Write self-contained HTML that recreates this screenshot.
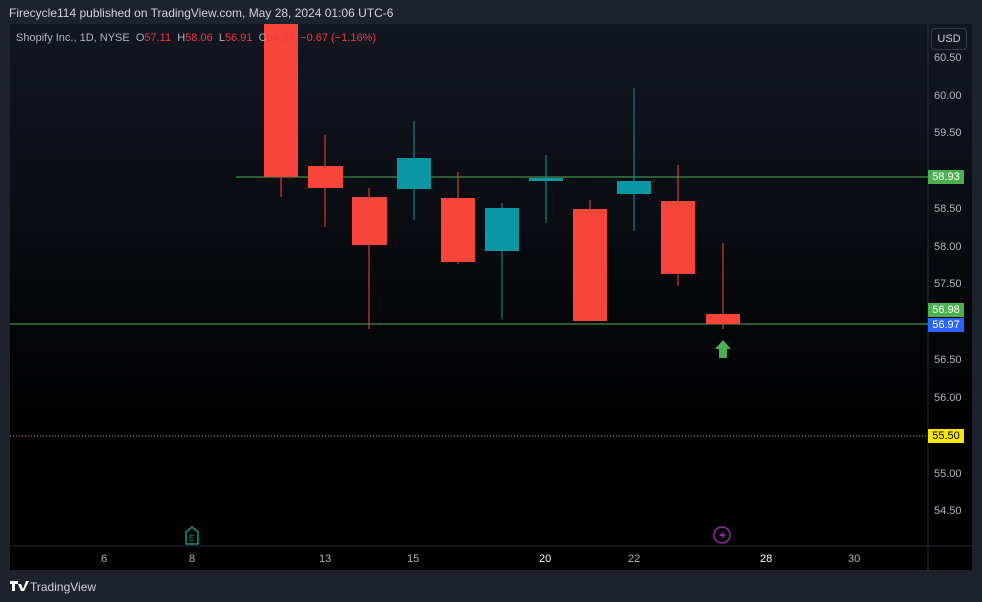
<!DOCTYPE html><html><head><style>
body{margin:0;width:982px;height:602px;background:#1e222d;font-family:"Liberation Sans",sans-serif;overflow:hidden;position:relative}
.t{position:absolute;color:#d1d4dc;font-size:12px}
#chart{position:absolute;left:10px;top:24px;width:962px;height:546px;background:linear-gradient(#131722,#000 75%);border:0}
.ax{position:absolute;color:#b2b5be;font-size:11px}
.lbl{position:absolute;left:928px;width:36px;height:14px;font-size:11px;line-height:14px;text-align:center;color:#000}
</style></head><body>
<div class="t" style="left:9px;top:6px">Firecycle114 published on TradingView.com, May 28, 2024 01:06 UTC-6</div>
<div id="chart"></div>
<svg style="position:absolute;left:0;top:0" width="982" height="602">
<line x1="928" y1="24" x2="928" y2="570" stroke="#2a2e39"/>
<line x1="10" y1="546" x2="972" y2="546" stroke="#2a2e39"/>
<line x1="236" y1="177" x2="928" y2="177" stroke="#4caf50"/>
<line x1="10" y1="324" x2="928" y2="324" stroke="#4caf50"/>
<line x1="10" y1="436" x2="928" y2="436" stroke="#c8b400" stroke-dasharray="1 2"/>
<g stroke-width="1">
<line x1="281" y1="24" x2="281" y2="197" stroke="#f7453a"/><rect x="264" y="24" width="34" height="153" fill="#f7453a"/>
<line x1="325" y1="135" x2="325" y2="227" stroke="#f7453a"/><rect x="308" y="166" width="35" height="22" fill="#f7453a"/>
<line x1="369" y1="188" x2="369" y2="329" stroke="#f7453a"/><rect x="352" y="197" width="35" height="48" fill="#f7453a"/>
<line x1="414" y1="121" x2="414" y2="220" stroke="#0b97a4"/><rect x="397" y="158" width="34" height="31" fill="#0b97a4"/>
<line x1="458" y1="172" x2="458" y2="264" stroke="#f7453a"/><rect x="441" y="198" width="34" height="64" fill="#f7453a"/>
<line x1="502" y1="203" x2="502" y2="319" stroke="#0b97a4"/><rect x="485" y="208" width="34" height="43" fill="#0b97a4"/>
<line x1="546" y1="155" x2="546" y2="223" stroke="#0b97a4"/><rect x="529" y="178" width="34" height="3" fill="#0b97a4"/>
<line x1="590" y1="200" x2="590" y2="321" stroke="#f7453a"/><rect x="573" y="209" width="34" height="112" fill="#f7453a"/>
<line x1="634" y1="88" x2="634" y2="231" stroke="#0b97a4"/><rect x="617" y="181" width="34" height="13" fill="#0b97a4"/>
<line x1="678" y1="165" x2="678" y2="286" stroke="#f7453a"/><rect x="661" y="201" width="34" height="73" fill="#f7453a"/>
<line x1="723" y1="243" x2="723" y2="329" stroke="#f7453a"/><rect x="706" y="314" width="34" height="10" fill="#f7453a"/>
</g>
<path d="M723 340 L731 349 L727 349 L727 358 L719 358 L719 349 L715 349 Z" fill="#4caf50"/>
<path d="M186 532 L192 527 L198 532 L198 544 L186 544 Z" fill="none" stroke="#089981" stroke-width="1.5"/>
<text x="189" y="541" fill="#089981" font-size="8" font-family="Liberation Sans">E</text>
<circle cx="722" cy="535" r="8" fill="none" stroke="#9c27b0" stroke-width="1.5"/>
<path d="M724 530 L719 536 L723 536 L721 541 L726 534 L722 534 Z" fill="#9c27b0"/>
<path d="M10 581 h8 v3 h-3 v7 h-3 v-7 h-2z M18 584 h3 l2 5 l3 -8 h3 l-5 10 h-3z" fill="#fff"/>
</svg>
<div class="t" style="left:30px;top:580px;font-size:12px">TradingView</div>
<div class="t" style="left:16px;top:32px;font-size:11px;color:#b2b5be">Shopify Inc., 1D, NYSE&nbsp; O<span style="color:#f23645">57.11</span>&nbsp; H<span style="color:#f23645">58.06</span>&nbsp; L<span style="color:#f23645">56.91</span>&nbsp; C<span style="color:#f23645">56.97&nbsp; −0.67 (−1.16%)</span></div>
<div style="position:absolute;left:931px;top:28px;width:34px;height:20px;border:1px solid #363a45;border-radius:4px;color:#d1d4dc;font-size:11px;line-height:20px;text-align:center">USD</div>
<div class="ax" style="left:934px;top:52px">60.50</div>
<div class="ax" style="left:934px;top:90px">60.00</div>
<div class="ax" style="left:934px;top:127px">59.50</div>
<div class="ax" style="left:934px;top:203px">58.50</div>
<div class="ax" style="left:934px;top:241px">58.00</div>
<div class="ax" style="left:934px;top:278px">57.50</div>
<div class="ax" style="left:934px;top:354px">56.50</div>
<div class="ax" style="left:934px;top:392px">56.00</div>
<div class="ax" style="left:934px;top:468px">55.00</div>
<div class="ax" style="left:934px;top:505px">54.50</div>
<div class="lbl" style="top:170px;background:#4caf50;color:#fff">58.93</div>
<div class="lbl" style="top:303px;background:#4caf50;color:#fff">56.98</div>
<div class="lbl" style="top:318px;background:#2962ff;color:#fff">56.97</div>
<div class="lbl" style="top:429px;background:#f7e600">55.50</div>
<div class="ax" style="left:101px;top:553px">6</div>
<div class="ax" style="left:189px;top:553px">8</div>
<div class="ax" style="left:319px;top:553px">13</div>
<div class="ax" style="left:407px;top:553px">15</div>
<div class="ax" style="left:539px;top:553px;color:#fff">20</div>
<div class="ax" style="left:628px;top:553px">22</div>
<div class="ax" style="left:760px;top:553px;color:#fff">28</div>
<div class="ax" style="left:848px;top:553px">30</div>
</body></html>
